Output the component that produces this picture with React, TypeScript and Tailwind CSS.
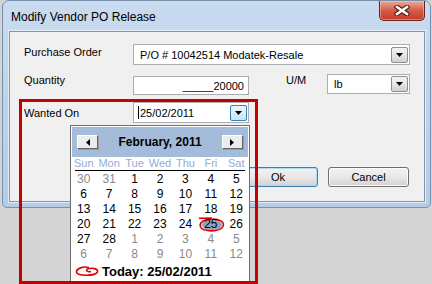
import React from "react";

const SANS = "font-['Liberation_Sans',Arial,sans-serif]";

function DropBtn({ hover }: { hover?: boolean }) {
  return (
    <div
      className={`w-[17px] h-[16px] flex items-center justify-center border rounded-[2px] ${
        hover
          ? "border-[#3c7fb1] bg-gradient-to-b from-[#eaf6fd] to-[#c4e5f6]"
          : "border-[#8e8f8f] bg-gradient-to-b from-[#f3f3f3] via-[#e6e6e6] to-[#d0d0d0]"
      }`}
    >
      <svg width="7" height="4" viewBox="0 0 7 4">
        <path d="M0 0H7L3.5 4Z" fill="#000" />
      </svg>
    </div>
  );
}

function NavBtn({ dir }: { dir: "l" | "r" }) {
  return (
    <div className="w-[21px] h-[14px] flex items-center justify-center bg-[#ececec] border border-t-white border-l-white border-b-[#646464] border-r-[#646464] shadow-[1px_1px_0_#9a9a9a]">
      <svg width="4" height="7" viewBox="0 0 4 7">
        {dir === "l" ? <path d="M4 0V7L0 3.5Z" fill="#000" /> : <path d="M0 0V7L4 3.5Z" fill="#000" />}
      </svg>
    </div>
  );
}

type Day = { n: number; g?: boolean; sel?: boolean };

const rows: Day[][] = [
  [{ n: 30, g: true }, { n: 31, g: true }, { n: 1 }, { n: 2 }, { n: 3 }, { n: 4 }, { n: 5 }],
  [{ n: 6 }, { n: 7 }, { n: 8 }, { n: 9 }, { n: 10 }, { n: 11 }, { n: 12 }],
  [{ n: 13 }, { n: 14 }, { n: 15 }, { n: 16 }, { n: 17 }, { n: 18 }, { n: 19 }],
  [{ n: 20 }, { n: 21 }, { n: 22 }, { n: 23 }, { n: 24 }, { n: 25, sel: true }, { n: 26 }],
  [{ n: 27 }, { n: 28 }, { n: 1, g: true }, { n: 2, g: true }, { n: 3, g: true }, { n: 4, g: true }, { n: 5, g: true }],
  [{ n: 6, g: true }, { n: 7, g: true }, { n: 8, g: true }, { n: 9, g: true }, { n: 10, g: true }, { n: 11, g: true }, { n: 12, g: true }],
];

function Calendar() {
  return (
    <div className={`absolute left-[70px] top-[125px] w-[180px] h-[170px] bg-white border border-[#6e6e6e] ${SANS}`}>
      <div className="mx-[1px] mt-[1px] h-[30px] bg-[#a4bcd9] flex items-center justify-between px-[5px]">
        <NavBtn dir="l" />
        <span className="text-[12px] font-bold text-black leading-[14px]">February, 2011</span>
        <NavBtn dir="r" />
      </div>
      <div className="grid grid-cols-7 h-[13px] text-[11px] leading-[13px] text-[#93acd3] text-center">
        {["Sun", "Mon", "Tue", "Wed", "Thu", "Fri", "Sat"].map((d) => (
          <div key={d}>{d}</div>
        ))}
      </div>
      <div className="mx-[4px] h-[1px] bg-black" />
      <div className="mt-[1px]">
        {rows.map((r, i) => (
          <div key={i} className="grid grid-cols-7 h-[15px] text-[12px] leading-[15px] text-center">
            {r.map((d, j) => (
              <div key={j} className={`relative ${d.g ? "text-[#8a8a8a]" : "text-black"}`}>
                {d.sel && (
                  <svg className="absolute left-[0px] top-[0px] overflow-visible" width="27" height="16" viewBox="0 0 27 16">
                    <ellipse cx="14" cy="8" rx="10" ry="6" fill="#8ea4c0" />
                    <path
                      d="M1 1.2 L14 1 M13 2.2 C5 2.5 1 6 2.5 10 C5 15 22 15.5 25 9.5 C27 4.5 21 1.8 14 2.2"
                      stroke="#e00000"
                      strokeWidth="1.6"
                      fill="none"
                    />
                  </svg>
                )}
                <span className="relative">{d.n}</span>
              </div>
            ))}
          </div>
        ))}
      </div>
      <div className="h-[18px] flex items-center pl-[4px]">
        <svg width="24" height="12" viewBox="0 0 24 12">
          <path
            d="M14 2.5 C8 1 1.5 3.5 1.5 7 C1.5 11 20 11.5 22.5 7 C23.5 3.5 17 2.5 12.5 4 C10.5 5 12 7.5 16 6.5"
            stroke="#e00000"
            strokeWidth="1.6"
            fill="none"
          />
        </svg>
        <span className="ml-[3px] text-[13px] font-bold text-black leading-[15px]">Today: 25/02/2011</span>
      </div>
    </div>
  );
}

export default function App() {
  return (
    <div className={`w-[432px] h-[284px] bg-[#d4d4d4] relative overflow-hidden ${SANS}`}>
      <div className="ml-[2px] w-[429px] h-[208px] rounded-t-[7px] rounded-b-[5px] border border-[#7890ab] bg-gradient-to-b from-[#c9dbef] via-[#bed3eb] to-[#b5cce7] flex flex-col">
        <div className="h-[30px] flex justify-between items-start">
          <span className="ml-[8px] mt-[9px] text-[12px] leading-[14px] text-black">Modify Vendor PO Release</span>
          <div className="w-[46px] h-[20px] mr-[5px] rounded-b-[5px] border border-t-0 border-[#6a2219] bg-gradient-to-b from-[#e9aa9c] via-[#d45a48] to-[#c23b2b] shadow-[inset_0_0_0_1px_rgba(255,210,200,0.45)] flex items-center justify-center">
            <svg width="16" height="11" viewBox="0 0 16 11">
              <path d="M3 2L13 9M13 2L3 9" stroke="#4a1a14" strokeWidth="4.6" strokeLinecap="square" />
              <path d="M3 2L13 9M13 2L3 9" stroke="#ffffff" strokeWidth="2.6" strokeLinecap="square" />
            </svg>
          </div>
        </div>
        <div className="ml-[6px] w-[416px] h-[171px] border border-[#8196b0] shadow-[0_0_0_1px_#e3edf8] bg-[#f0f0f0] flex flex-col pl-[14px] text-[11px] text-black">
          <div className="mt-[12px] h-[21px] flex items-start">
            <div className="w-[109px] pt-[1px] leading-[14px]">Purchase Order</div>
            <div className="w-[277px] h-[21px] bg-white border border-[#abadb3] flex items-center justify-between pl-[6px] pr-[1px]">
              <span className="leading-[14px]">P/O # 10042514 Modatek-Resale</span>
              <DropBtn />
            </div>
          </div>
          <div className="mt-[8px] h-[22px] flex items-start">
            <div className="w-[109px] leading-[14px]">Quantity</div>
            <div className="mt-[3px] w-[116px] h-[19px] bg-white border border-[#abadb3] flex items-center justify-end pr-[4px]">
              <span className="leading-[14px]">_____20000</span>
            </div>
            <div className="ml-[37px] w-[41px] leading-[14px]">U/M</div>
            <div className="mt-[1px] w-[83px] h-[20px] bg-white border border-[#abadb3] flex items-center justify-between pl-[6px] pr-[1px]">
              <span className="leading-[14px]">lb</span>
              <DropBtn />
            </div>
          </div>
          <div className="mt-[7px] h-[21px] flex items-start">
            <div className="w-[109px] pt-[4px] leading-[14px]">Wanted On</div>
            <div className="w-[116px] h-[21px] bg-white border border-[#abadb3] flex items-center justify-between pl-[4px] pr-[1px]">
              <span className="flex items-center leading-[14px]">
                <span className="w-[1px] h-[13px] bg-black mr-[1px]" />
                25/02/2011
              </span>
              <DropBtn hover />
            </div>
          </div>
          <div className="mt-[44px] h-[20px] flex justify-end gap-[10px] pr-[15px]">
            <div className="w-[80px] h-[20px] rounded-[3px] border border-[#3c7fb1] shadow-[inset_0_0_0_1px_#a8dcf7] bg-gradient-to-b from-[#f2f2f2] via-[#e8e8e8] to-[#d2d2d2] flex items-center justify-center leading-[14px]">
              Ok
            </div>
            <div className="w-[81px] h-[20px] rounded-[3px] border border-[#707070] shadow-[inset_0_0_0_1px_#fbfbfb] bg-gradient-to-b from-[#f2f2f2] via-[#e8e8e8] to-[#d2d2d2] flex items-center justify-center leading-[14px]">
              Cancel
            </div>
          </div>
        </div>
      </div>
      <Calendar />
      <div className="absolute left-[19px] top-[99px] w-[239px] h-[185px] border-[3px] border-[#c40000]" />
    </div>
  );
}
